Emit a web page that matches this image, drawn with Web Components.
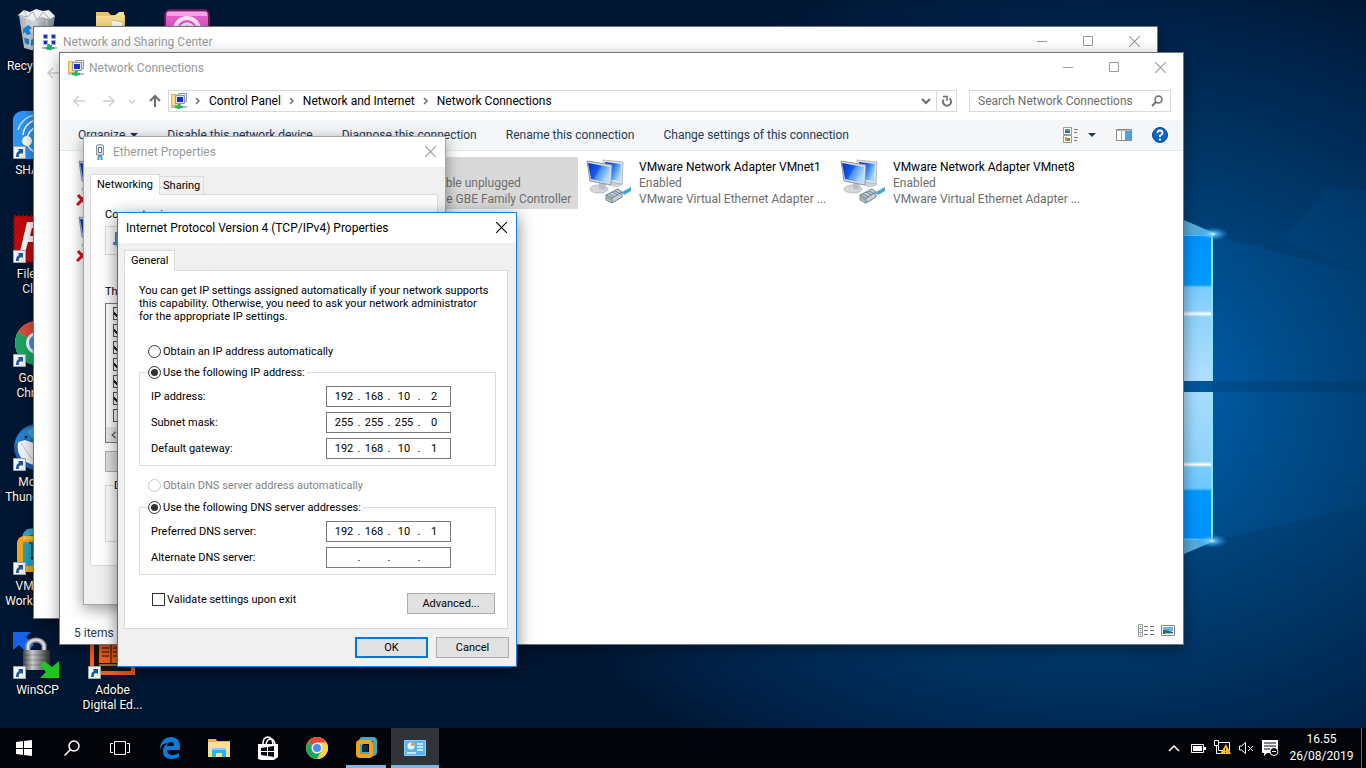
<!DOCTYPE html>
<html lang="en">
<head>
<meta charset="utf-8">
<title>Desktop</title>
<style>
html, body { margin: 0; height: 100%; overflow: hidden; background: #001a38; }
body { font: 12px/16px Roboto, "Open Sans", sans-serif; }
win-desktop { height: 100%; }
#sharing { left: 33px; right: 208px; top: 26px; bottom: 109px; }
#connections { left: 59px; right: 182px; top: 52px; bottom: 83px; }
#ethernet { left: 83px; top: 136px; width: 363px; }
#ipv4 { left: 117px; top: 212px; width: 400px; }
</style>
</head>
<body>
<win-desktop>
  <desk-icon icon="bin">Recycle Bin</desk-icon>
  <desk-icon icon="shareit" shortcut>SHAREit</desk-icon>
  <desk-icon icon="filezilla" shortcut>FileZilla<br>Client</desk-icon>
  <desk-icon icon="chrome" shortcut>Google<br>Chrome</desk-icon>
  <desk-icon icon="thunderbird" shortcut>Mozilla<br>Thunderbird</desk-icon>
  <desk-icon icon="vmware" shortcut>VMware<br>Workstation</desk-icon>
  <desk-icon icon="winscp" shortcut>WinSCP</desk-icon>
  <desk-icon icon="folder" style="grid-area:1/2"></desk-icon>
  <desk-icon icon="adobe" shortcut style="grid-area:7/2">Adobe<br>Digital Ed...</desk-icon>
  <desk-icon icon="pink" style="grid-area:1/3"></desk-icon>

  <win-frame id="sharing" slot="windows" icon="netcenter" heading="Network and Sharing Center" resizable>
    <back-strip></back-strip>
  </win-frame>

  <win-frame id="connections" slot="windows" icon="netfolder" heading="Network Connections" resizable>
    <explorer-nav></explorer-nav>
    <command-bar></command-bar>
    <adapter-list></adapter-list>
    <status-bar>5 items</status-bar>
  </win-frame>

  <win-frame id="ethernet" slot="windows" icon="plug" heading="Ethernet Properties" dialog>
    <ethernet-form></ethernet-form>
  </win-frame>

  <win-frame id="ipv4" slot="windows" heading="Internet Protocol Version 4 (TCP/IPv4) Properties" dialog active>
    <ip-form></ip-form>
  </win-frame>

  <task-bar slot="taskbar"></task-bar>
</win-desktop>

<script>
const ICONS = {
  bin: ['0 0 48 48', `<defs><linearGradient id="g" x2="1"><stop offset="0" stop-color="#b9c0c6"/><stop offset=".4" stop-color="#f0f2f3"/><stop offset="1" stop-color="#8e979e"/></linearGradient></defs>
    <path d="M6 8 42 9 37 42Q25 46 11 41Z" fill="url(#g)" opacity=".9"/><path d="M5 8 11 3 17 5 23 2 30 4 36 3 42 9 37 12 28 10 20 14 12 11Z" fill="#eef0f1"/><path d="m11 3 3 7 6-5 4 8 6-8 6 6M5 8l9 2m16-5 7 7" stroke="#a9b0b5" fill="none"/>
    <path d="M14 12 16 40M24 14v29M34 13 31 42" stroke="#fff" opacity=".5"/>
    <path d="m10 22 5-4 4 3-3 2 2 4-4 1-2-3-2 2zM21 19l5 1 2 7-4 0-3-4zM11 31l5 1 0 6-4-2zM18 33l6-3 1 5-7 4z" fill="#1683d8"/>`],
  shareit: ['0 0 48 48', `<rect width="48" height="48" rx="9" fill="#2d96f5"/><g fill="none" stroke="#fff" stroke-width="1.500"><path d="M10 24A16 16 0 0 1 28 9" /><path d="M5 19A20 20 0 0 1 24 4" opacity=".7"/><path d="M14 30Q14 20 24 15"/><path d="M14 30a12 12 0 0 0 18 10"/></g><circle cx="14" cy="30" r="5" fill="#fff"/><circle cx="25" cy="14" r="4" fill="#fff"/><circle cx="34" cy="34" r="4" fill="#fff"/>`],
  filezilla: ['0 0 48 48', `<rect x="1" y="1" width="46" height="46" fill="#bd0a0a" stroke="#a30000" stroke-width="2" stroke-dasharray="2 2"/><path d="M14 7h18l-2 6H19l-2 8h10l-2 6H15l-4 14H6zM30 22h14l-1 5-12 9h10l-2 6H24l1-5 11-9h-7z" fill="#fff"/>`],
  chrome: ['0 0 48 48', `<circle cx="24" cy="24" r="22" fill="#fcd23f"/><path d="M24 24 5 13A22 22 0 0 1 43 13H24Z" fill="#dd4b3e"/><path d="M5 13A22 22 0 0 0 24 46l10-17-10-5z" fill="#1da462"/><path d="M43 13A22 22 0 0 1 24 46l10-17 0-16z" fill="#fcd23f"/><circle cx="24" cy="24" r="11" fill="#f4f4f4"/><circle cx="24" cy="24" r="8" fill="#4a8af4"/>`],
  thunderbird: ['0 0 48 48', `<circle cx="24" cy="24" r="23" fill="#245fb5"/><path d="M5 19 12 17 21 20 26 12 44 18 41 38Q24 47 10 37 3 30 5 19Z" fill="#f3f6fa"/><path d="m8 20 11 16 20-20" fill="none" stroke="#b7c3d0"/><path d="M2 22C4 4 21 2 29 2 19 6 22 12 17 18 12 14 8 17 2 22Z" fill="#2383d0"/><path d="M14 9Q18 4 28 3 20 7 20 16Z" fill="#3aa5e4"/><circle cx="13" cy="14" r="1.500" fill="#0c2c5c"/>`],
  vmware: ['0 0 48 48', `<rect x="13" y="5" width="31" height="31" rx="5" fill="none" stroke="#43a7c3" stroke-width="7"/><rect x="16" y="10" width="20" height="20" fill="#0e657f"/><path d="M10 17h8v22h-8z" fill="#2aa3bd"/><rect x="7" y="12" width="29" height="30" rx="4" fill="none" stroke="#f4a91c" stroke-width="6"/><path d="M10 11H33" stroke="#ffcb3b" stroke-width="3"/>`],
  vmtask: ['0 0 24 24', `<rect x="7" y="3" width="14" height="15" rx="2" fill="none" stroke="#47a9bf" stroke-width="4"/><rect x="4" y="6" width="13" height="14" rx="2" fill="none" stroke="#f2a21a" stroke-width="4"/><rect x="8" y="9" width="6" height="7" fill="#0b2c3a"/>`],
  winscp: ['0 0 48 48', `<defs><linearGradient id="g" x2="1"><stop offset="0" stop-color="#444"/><stop offset=".35" stop-color="#c9c9c9"/><stop offset="1" stop-color="#292929"/></linearGradient></defs>
    <path d="M0 1h18l-5 5 8 8-8 7-7-7-6 5z" fill="#1462e8"/><path d="M15 20v-6a9 9 0 0 1 16 0v6" fill="none" stroke="#9a9a9a" stroke-width="5"/><path d="M15 20v-6a9 9 0 0 1 16 0v6" fill="none" stroke="#ddd" stroke-width="2"/><rect x="10" y="19" width="27" height="20" rx="2" fill="url(#g)"/><path d="M11 24h25M11 29h25M11 34h25" stroke="#222" opacity=".3"/><path d="m31 30 8 6 7-6v17H27l6-6-6-6z" fill="#1fc522"/>`],
  folder: ['0 0 48 48', `<path d="M8 5h12l3 3h14v34H8z" fill="#e9c65d"/><path d="M8 9h18l5-4h5v38H8z" fill="#f8df92"/><path d="m23 13 12 2v25H21z" fill="#fff" stroke="#d5c079"/><path d="M8 10h16v32H8z" fill="#f6dc88"/>`],
  pink: ['0 0 48 48', `<rect x="2" y="3" width="44" height="43" rx="5" fill="#e45fce" stroke="#5d2158" stroke-width="2"/><path d="M4 7h40" stroke="#f6a3e8" stroke-width="4"/><circle cx="24" cy="23" r="12" fill="none" stroke="#f9e7f6" stroke-width="4"/><path d="M16 22q8-9 14-2" fill="none" stroke="#f9e7f6" stroke-width="3"/>`],
  adobe: ['0 0 48 48', `<rect x="4" y="3" width="41" height="39" fill="#1c1406" stroke="#f7611d" stroke-width="4"/><rect x="11" y="8" width="26" height="24" fill="#f7611d"/><path d="M11 34h26" stroke="#e8c9a0"/><path d="M23 8v24M14 13h7m-7 4h7m-7 4h7m-7 4h7m4-12h7m-7 4h7m-7 4h7m-7 4h7" stroke="#1c1406" fill="none"/>`],
  shortcut: ['0 0 13 13', `<path d="M.5.5h12v12H.5z" fill="#f4f4f4" stroke="#9aa"/><path d="M5 3h5v5L8 7Q5 8 6 11H3Q3 6 6 5Z" fill="#1c57a5"/>`],
  netcenter: ['0 0 16 16', `<g fill="#1730b8" stroke="#a9b1b9"><path d="M1.500.5h4v4h-4zM9.500.5h4v4h-4zM1.500 6.500h4v4h-4zM9.500 6.500h4v4h-4z"/></g><path d="M0 14h15" stroke="#b6bec6" stroke-width="2"/><path d="M7 10v3M3 14h9M6 12h3v4H6z" stroke="#17b968" stroke-width="2" fill="#17b968"/>`],
  netfolder: ['0 0 16 16', `<path d="M.5 1.500h5l1 1h3v10h-9z" fill="#f5dc7c" stroke="#d8b64c"/><path d="M7.500 0.500h8v8h-8z" fill="#dfe5ea" stroke="#8d9aa5"/><path d="M9 2h5v4H9z" fill="#6f86e0"/><path d="M4.500 2.500h9v8h-9z" fill="#dfe5ea" stroke="#8d9aa5"/><path d="M6 4h6v5H6z" fill="#1431c4"/><path d="M0 14h16" stroke="#b6bec6" stroke-width="2"/><path d="M4 14h8M8 11v5" stroke="#17b968" stroke-width="2.500"/>`],
  plug: ['0 0 16 16', `<path d="M4.500 1.500Q8-1 11.500 1.500V11h-7z" fill="#dbe4ec" stroke="#8493a1"/><path d="M6.500 3.500h3v5h-3z" fill="#fff" stroke="#5e6f7f"/><path d="M6 11h4v2H6z" fill="#7c8b99"/><path d="M6.500 13v3M9.500 13v3" stroke="#2da7df" stroke-width="2"/>`],
  nic: ['0 0 16 16', `<path d="M2.500 1.500h12v10h-12z" fill="#6cb5e0" stroke="#3a7ba8"/><path d="M0 11h14v3H0z" fill="#4d94c4"/><path d="M2 15h11" stroke="#b0b7bd"/>`],
  back: ['0 0 16 14', `<path d="M14 7H3M8 2 3 7l5 5" fill="none" stroke="#cfcfcf" stroke-width="1.500"/>`],
  forward: ['0 0 16 14', `<path d="M2 7h11M8 2l5 5-5 5" fill="none" stroke="#cfcfcf" stroke-width="1.500"/>`],
  up: ['0 0 14 14', `<path d="M7 13V3M2 7l5-5 5 5" fill="none" stroke="#6d6d6d" stroke-width="2"/>`],
  down: ['0 0 10 10', `<path d="m1 3 4 4 4-4" fill="none" stroke="#6d6d6d" stroke-width="2"/>`],
  recent: ['0 0 8 8', `<path d="m1 3 3 3 3-3" fill="none" stroke="#cfcfcf" stroke-width="1.500"/>`],
  right: ['0 0 6 8', `<path d="m1 1 3 3-3 3" fill="none" stroke="#6d6d6d" stroke-width="1.500"/>`],
  refresh: ['0 0 12 12', `<path d="M2.700 4.500A4 4 0 1 0 8.500 3.500" fill="none" stroke="#6d6d6d" stroke-width="2"/><path d="M2 1.500h4V6" fill="none" stroke="#6d6d6d" stroke-width="1.500"/>`],
  search: ['0 0 12 12', `<circle cx="7.500" cy="4.500" r="3.500" fill="none" stroke="#6d6d6d" stroke-width="1.500"/><path d="M5 7 1 11" stroke="#6d6d6d" stroke-width="2"/>`],
  caret: ['0 0 8 8', `<path d="M0 2h8L4 6z" fill="#1e395b"/>`],
  view: ['0 0 16 16', `<path d="M.5.5h8v7h-8zM.5 8.500h8v7h-8z" fill="#fff" stroke="#999"/><path d="M2 2h5v2H2z" fill="#4b95e3"/><path d="M2 4h5v2H2z" fill="#2b7355"/><path d="M2 10h2v4H2z" fill="#e59b31"/><path d="M4 11h3v3H4z" fill="#4c9c42"/><path d="M11 2.500h4m-4 3h3m-3 5h4m-4 3h3" stroke="#777"/>`],
  pane: ['0 0 16 12', `<path d="M.5.5h15v11H.5z" fill="#fff" stroke="#888"/><path d="M1 1h14v1H1z" fill="#bbb"/><path d="M5.500 2v9" stroke="#aaa"/><path d="M9 2h6v9H9z" fill="#4aa3e8"/>`],
  help: ['0 0 16 16', `<circle cx="8" cy="8" r="7.500" fill="#0a66c9" stroke="#08488f"/><path d="M5.500 6Q5.500 3.500 8 3.500T10.500 6Q10.500 7.500 8 8.500V10" fill="none" stroke="#fff" stroke-width="1.800"/><path d="M7 11.500h2v2H7z" fill="#fff"/>`],
  details: ['0 0 16 13', `<path d="M.5.5h4v12h-4zM.5 4.500h4M.5 8.500h4" fill="#fff" stroke="#999"/><path d="M2 2h1v1H2z" fill="#3b7"/><path d="M2 6h1v1H2z" fill="#37c"/><path d="M2 10h1v1H2z" fill="#c22"/><path d="M6 2.500h4m2 0h4m-10 4h4m2 0h4m-10 4h4m2 0h4" stroke="#777"/>`],
  large: ['0 0 14 12', `<path d="M.5.5h13v10H.5z" fill="#fff" stroke="#888"/><path d="M2 2h10v4H2z" fill="#6fb0ee"/><path d="M2 5q5 0 10 2v2H2z" fill="#2d6d50"/><path d="M4 8h8v1H4z" fill="#7ec3f3"/>`],
  adapter: ['0 0 46 46', `<defs><linearGradient id="g" x2="1" y2=".5"><stop offset="0" stop-color="#0a2fc0"/><stop offset=".45" stop-color="#1158ea"/><stop offset=".7" stop-color="#4a9af6"/><stop offset="1" stop-color="#a9d6fb"/></linearGradient></defs>
    <ellipse cx="30" cy="25" rx="7" ry="3" fill="#ccd1d6"/><path d="m17 1 20 2-1 22-17-3z" fill="#dfe2e4" stroke="#b3b8bc"/><path d="m19 3 16 2-1 17-14-2z" fill="url(#g)"/>
    <ellipse cx="13" cy="30" rx="9" ry="4" fill="#d4d8dc" stroke="#b9bec3"/><path d="m13 22 7 2-1 7-6-1z" fill="#b9bfc4"/><path d="m1 2 25 4-1 20L4 22z" fill="#dadde0" stroke="#8f969c"/><path d="m2 4 22 4-1 16L5 20z" fill="url(#g)"/><path d="m8 20 8-13 8 1-1 15z" fill="#fff" opacity=".15"/>
    <path d="m20 36 12-6 4 3 0 5-10 6-6-3z" fill="#c3d0dc" stroke="#6c8093"/><path d="m20 36 6 3v5m0-5 10-6M23 35l6 3M26 33l6 3M29 32l6 3" fill="none" stroke="#6c8093"/><path d="m21 37 4 2v3l-4-2z" fill="#a5a988"/><path d="m36 33 9-5v4l-7 4z" fill="#3cabd3"/>`],
  cross: ['0 0 12 12', `<path d="m2 1 9 10M11 1 1 11" stroke="#d2161c" stroke-width="3"/>`],
  start: ['0 0 16 16', `<path d="m0 2 7-1v7H0zM8 1l8-1v8H8zM0 9h7v6l-7-1zM8 9h8v7l-8-1z" fill="#fff"/>`],
  find: ['0 0 16 16', `<circle cx="10" cy="6" r="5" fill="none" stroke="#fff" stroke-width="1.500"/><path d="M6.500 9.500 0.500 15.500" stroke="#fff" stroke-width="1.500"/>`],
  taskview: ['0 0 20 14', `<path d="M4.500.5h11v13h-11zM3 2.500H.5v9H3M17 2.500h2.500v9H17" fill="none" stroke="#fff"/>`],
  edge: ['0 0 20 22', `<path d="M0 10Q2 0 11 0q9 0 9 10v3H7q0 5 6 5 3 0 6-2v4q-3 2-8 2-8 0-8-8 0-5 5-8-6 0-8 6zm7-1h7q0-4-3-4t-4 4z" fill="#0a7ad6"/>`],
  explorer: ['0 0 22 18', `<path d="M0 0h8l1 2h13v16H0z" fill="#e8b63c"/><path d="M0 3h22v15H0z" fill="#fbe18b"/><path d="M4 18V9h14v9h-4v-4H8v4z" fill="#27b4ea"/><path d="M4 9h14v2H4z" fill="#79d3f4"/>`],
  store: ['0 0 22 24', `<path d="M1 8h20v13l-4 3H4l-3-1z" fill="#fff"/><path d="M6 8q0-7 5-7 4 0 5 7M9 8q1-5 5-5 3 0 4 5" fill="none" stroke="#fff" stroke-width="1.500"/><path d="m4 12 6-1v4H4zm7-1 6-1v5h-6zm-7 5h6v4l-6-1zm7 0h6v5l-6-1z" fill="#04070d"/>`],
  control: ['0 0 22 16', `<path d="M.5.5h21v15H.5z" fill="#5cb5ee" stroke="#86d0fa"/><circle cx="7" cy="6" r="3.500" fill="#f0f8ff"/><path d="M7 6V2.500A3.500 3.500 0 0 1 10.500 6z" fill="#f2a22a"/><path d="M13 4h6m-6 3h6m-6 3h6M3 13h9" stroke="#eaf6ff" stroke-width="1.500"/>`],
  chevup: ['0 0 12 8', `<path d="m1 7 5-5 5 5" fill="none" stroke="#fff" stroke-width="1.500"/>`],
  battery: ['0 0 15 9', `<path d="M.5.5h12v8H.5z" fill="none" stroke="#fff"/><path d="M2 2h9v5H2zM13 3h2v3h-2z" fill="#fff"/>`],
  net: ['0 0 17 16', `<path d="M5 2.500h10.500v8H4.500V6M.5.5h4v5h-4zM2.500 6v7.500H7" fill="none" stroke="#fff"/><path d="m12 4 5 10H6z" fill="#fbbf24"/><path d="M11 8h1v3h-1zM11 12h1v1h-1z" fill="#222"/>`],
  volume: ['0 0 15 12', `<path d="M.5 4h2l4-3.500v11l-4-3.500h-2zM9 4l5 5M14 4 9 9" fill="none" stroke="#fff"/>`],
  action: ['0 0 17 17', `<path d="M0 0h16v9H8v4H5l-3 3v-3H0z" fill="#fff"/><path d="M2 3h12M2 6h12M2 9h6" stroke="#04070d"/><circle cx="12" cy="11.500" r="4" fill="#04070d" stroke="#fff"/><path d="M10 11.500h4" stroke="#fff"/>`],
  min: ['0 0 11 11', `<path d="M0 5.500h10" stroke="currentColor"/>`],
  max: ['0 0 11 11', `<path d="M.5.5h9v9h-9z" fill="none" stroke="currentColor"/>`],
  close: ['0 0 11 11', `<path d="m0 0 11 11M11 0 0 11" stroke="currentColor" stroke-width="1.100"/>`]
};

/* Registers an element whose shadow root holds the given style and markup. */
function element(name, css, html, setup) {
  customElements.define(name, class extends HTMLElement {
    constructor() {
      super();
      const root = this.attachShadow({ mode: 'open' });
      root.innerHTML = '<style>*{box-sizing:border-box}button{font:inherit;color:inherit;background:none;border:0;padding:0;margin:0}' + css + '</style>' +
        (typeof html === 'function' ? html(this) : html);
      if (setup) setup(this, root);
    }
  });
}

element('win-icon', ':host{display:inline-flex;flex:none}svg{display:block}', host => {
  const [box, shapes] = ICONS[host.getAttribute('name')];
  const [, , w, h] = box.split(' ');
  const size = (host.getAttribute('size') || w + ' ' + h).split(' ');
  return `<svg viewBox="${box}" width="${size[0]}" height="${size[1] || size[0]}" fill="none" aria-hidden="true">${shapes}</svg>`;
});

element('wall-paper', ':host{display:block}svg{display:block;width:100%;height:100%}', `
<svg viewBox="0 0 1366 768" preserveAspectRatio="xMidYMid slice" aria-hidden="true">
  <defs>
    <radialGradient id="sky" gradientUnits="userSpaceOnUse" cx="1090" cy="400" r="620" gradientTransform="translate(0 110) scale(1 .72)">
      <stop offset="0" stop-color="#0068b8"/><stop offset=".35" stop-color="#00467f"/><stop offset=".6" stop-color="#003463"/><stop offset=".85" stop-color="#002148"/><stop offset="1" stop-color="#001733"/>
    </radialGradient>
    <radialGradient id="flare"><stop offset="0" stop-color="#fff"/><stop offset=".2" stop-color="#7ed4ff" stop-opacity=".8"/><stop offset="1" stop-color="#0090ff" stop-opacity="0"/></radialGradient>
    <linearGradient id="beam" x2="1"><stop offset="0" stop-color="#0060b0" stop-opacity=".3"/><stop offset="1" stop-color="#005499" stop-opacity=".15"/></linearGradient>
    <linearGradient id="top" x2="0" y2="1"><stop offset="0" stop-color="#0092ff"/><stop offset=".34" stop-color="#009cff"/><stop offset=".36" stop-color="#7accff"/><stop offset=".52" stop-color="#8dd4ff"/><stop offset=".54" stop-color="#fff"/><stop offset=".56" stop-color="#8fd3fc"/><stop offset="1" stop-color="#aee0ff"/></linearGradient>
    <linearGradient id="low" x2="0" y2="1"><stop offset="0" stop-color="#a6dcff"/><stop offset=".47" stop-color="#8fd3fc"/><stop offset=".49" stop-color="#fff"/><stop offset=".51" stop-color="#7accff"/><stop offset=".65" stop-color="#6cc8ff"/><stop offset=".67" stop-color="#0098ff"/><stop offset="1" stop-color="#0092ff"/></linearGradient>
  </defs>
  <path d="M0 0h1366v768H0z" fill="#001733"/>
  <path d="M0 0h1366v768H0z" fill="url(#sky)"/>
  <path d="M1212 235 1366 275V505L1212 541Z" fill="url(#beam)"/>
  <path d="M1284 240 1325 188 1366 190V275Z" fill="#0060b0" opacity=".12"/>
  <path d="M1212 381H1366V392H1212Z" fill="#002a58" opacity=".25"/>
  <path d="M1040 235h173l-1 146h-172z" fill="url(#top)"/>
  <path d="M1040 392h172l-1 148h-171z" fill="url(#low)"/>
  <path d="M1212 235v146M1212 392v148" stroke="#8fe4ff" stroke-width="2"/>
  <path d="M1170 214 1214 233V236L1170 236ZM1170 560 1212 542V539L1170 538Z" fill="#73d2ff" opacity=".75"/>
  <ellipse cx="1213" cy="234" rx="16" ry="7" fill="url(#flare)"/><ellipse cx="1212" cy="541" rx="16" ry="7" fill="url(#flare)"/>
</svg>`);

element('win-desktop', `
:host{display:flex;flex-direction:column;position:relative;overflow:hidden;color:#000}
wall-paper{position:absolute;inset:0}
main{position:relative;flex:1;min-height:0}
.icons{display:grid;grid-auto-flow:column;grid-template-columns:75px 75px 75px;grid-template-rows:repeat(7,104px);color:#fff}
`, `<wall-paper></wall-paper><main><div class="icons"><slot></slot></div><slot name="windows"></slot></main><slot name="taskbar"></slot>`);

element('desk-icon', `
:host{display:block;text-align:center}
button{width:100%;padding-top:7px;line-height:15px;text-shadow:0 1px 2px #000,0 0 3px #000}
.art{position:relative;display:block;width:48px;margin:0 13px 4px}
.art win-icon{display:flex}
.art .arrow{position:absolute;left:0;bottom:0}
`, host => `<button><span class="art"><win-icon name="${host.getAttribute('icon')}"></win-icon>${host.hasAttribute('shortcut') ? '<win-icon class="arrow" name="shortcut"></win-icon>' : ''}</span><slot></slot></button>`);

element('win-frame', `
:host{position:absolute;display:flex;flex-direction:column;box-sizing:border-box;background:#fff;border:1px solid #6f7680;box-shadow:0 4px 14px rgba(0,0,0,.4)}
:host([dialog]){background:#f0f0f0;border-color:#a5a5a5}
:host([active]){border-color:#1883d7;box-shadow:0 4px 16px rgba(0,0,0,.5)}
header{display:flex;align-items:center;height:29px;padding-left:8px;background:#fff;color:#999;flex:none}
:host([dialog]) header{height:30px}
:host([active]) header{color:#000}
h1{flex:1;margin:0 0 0 5px;font:inherit;white-space:nowrap}
:host([active]) h1{margin-left:0}
button{display:grid;place-items:center;width:46px;height:28px;align-self:flex-start}
:host([dialog]) button{width:30px}
`, host => {
  const icon = host.getAttribute('icon');
  const wide = host.hasAttribute('resizable');
  return `<header>${icon ? `<win-icon name="${icon}"></win-icon>` : ''}<h1>${host.getAttribute('heading')}</h1>
  ${wide ? '<button aria-label="Minimize"><win-icon name="min"></win-icon></button><button aria-label="Maximize"><win-icon name="max"></win-icon></button>' : ''}
  <button aria-label="Close"><win-icon name="close"></win-icon></button></header><slot></slot>`;
});

element('back-strip', ':host{display:block;padding:10px 11px}', '<button aria-label="Back"><win-icon name="back"></win-icon></button>');

element('explorer-nav', `
:host{display:flex;align-items:center;height:38px;padding:0 12px 0 6px}
button{display:grid;place-items:center;width:26px;height:22px}
.back{margin-right:4px}.recent{width:20px}
.address{flex:1;display:flex;align-items:center;gap:8px;height:22px;border:1px solid #d9d9d9;padding-left:2px;min-width:0}
.address a{color:#000;text-decoration:none;white-space:nowrap}
.grow{flex:1}
.address button{width:20px}
.address .refresh{border-left:1px solid #d9d9d9;margin-left:-8px}
form{display:flex;align-items:center;width:202px;height:22px;border:1px solid #d9d9d9;margin-left:12px}
input{flex:1;min-width:0;border:0;padding:0 0 0 8px;font:inherit;background:none;outline:0}
input::placeholder{color:#6d6d6d;opacity:1}
`, `<button class="back" aria-label="Back"><win-icon name="back"></win-icon></button><button aria-label="Forward"><win-icon name="forward"></win-icon></button><button class="recent" aria-label="Recent locations"><win-icon name="recent"></win-icon></button><button aria-label="Up"><win-icon name="up"></win-icon></button>
<nav class="address"><win-icon name="netfolder"></win-icon><win-icon name="right"></win-icon><a href="#">Control Panel</a><win-icon name="right"></win-icon><a href="#">Network and Internet</a><win-icon name="right"></win-icon><a href="#">Network Connections</a><span class="grow"></span><button aria-label="Previous locations"><win-icon name="down"></win-icon></button><button class="refresh" aria-label="Refresh"><win-icon name="refresh"></win-icon></button></nav>
<form><input type="search" placeholder="Search Network Connections" aria-label="Search Network Connections"><button type="button" aria-label="Search"><win-icon name="search"></win-icon></button></form>`);

element('command-bar', `
:host{display:flex;align-items:center;gap:29px;height:31px;padding:0 15px 0 18px;background:#f4f6f8;border-bottom:1px solid #e5e8ea;color:#1e395b;box-sizing:border-box}
button{display:flex;align-items:center;gap:5px;white-space:nowrap}
.tools{display:flex;align-items:center;gap:20px;margin-left:auto}
.views{gap:9px}
`, `<button>Organize <win-icon name="caret"></win-icon></button><button>Disable this network device</button><button>Diagnose this connection</button><button>Rename this connection</button><button>Change settings of this connection</button>
<div class="tools"><button class="views" aria-label="Change your view"><win-icon name="view"></win-icon><win-icon name="caret"></win-icon></button><button aria-label="Preview pane"><win-icon name="pane"></win-icon></button><button aria-label="Help"><win-icon name="help"></win-icon></button></div>`);

element('adapter-list', `
:host{flex:1;display:grid;grid-template-columns:repeat(auto-fill,252px);grid-auto-rows:52px;gap:4px 2px;padding:6px 12px;align-content:start}
`, `<net-adapter off></net-adapter>
<net-adapter selected><span slot="state">Network cable unplugged</span><span slot="device">Realtek PCIe GBE Family Controller</span></net-adapter>
<net-adapter>VMware Network Adapter VMnet1<span slot="state">Enabled</span><span slot="device">VMware Virtual Ethernet Adapter ...</span></net-adapter>
<net-adapter>VMware Network Adapter VMnet8<span slot="state">Enabled</span><span slot="device">VMware Virtual Ethernet Adapter ...</span></net-adapter>
<net-adapter off></net-adapter>`);

element('net-adapter', `
:host{display:flex;gap:7px;padding:2px 0 2px 6px;position:relative;box-sizing:border-box;white-space:nowrap}
:host([selected]){background:#d9d9d9}
.mark{position:absolute;left:4px;bottom:3px}
div div{height:16px}
.grey{color:#6d6d6d}
`, host => `<win-icon name="adapter"></win-icon>${host.hasAttribute('off') ? '<win-icon class="mark" name="cross"></win-icon>' : ''}<div><div><slot></slot></div><div class="grey"><slot name="state"></slot></div><div class="grey"><slot name="device"></slot></div></div>`);

element('status-bar', ':host{display:flex;align-items:center;gap:7px;height:23px;padding:0 8px 0 14px;color:#1e395b;flex:none;box-sizing:border-box}span{flex:1}',
`<span><slot></slot></span><button aria-label="Details"><win-icon name="details"></win-icon></button><button aria-label="Large icons"><win-icon name="large"></win-icon></button>`);

element('tab-sheet', `
:host{display:block}
.tabs{display:flex;align-items:flex-end;margin-bottom:-1px;position:relative}
button{height:19px;padding:0 3px;background:#f0f0f0;border:1px solid #dcdcdc;border-left:0}
button:first-child{height:21px;padding:0 6px;background:#fff;border-left:1px solid #dcdcdc;border-bottom-color:#fff}
section{background:#fff;border:1px solid #dcdcdc;padding:13px 11px 14px 14px}
`, host => `<div class="tabs" role="tablist">${host.getAttribute('tabs').split(',').map((t, i) => `<button role="tab" aria-selected="${!i}">${t}</button>`).join('')}</div><section role="tabpanel"><slot></slot></section>`);

element('group-box', `
:host{display:block}
fieldset{margin:0;border:1px solid #dcdcdc;padding:5px 11px 6px 8px;min-width:0}
legend{padding:0 2px 0 0}
.body{display:flex;flex-direction:column;gap:5px;padding-left:3px}
`, `<fieldset><legend><slot name="legend"></slot></legend><div class="body"><slot></slot></div></fieldset>`);

element('choice-input', `
:host{display:block;line-height:17px}
label{display:flex;align-items:center;gap:2px;height:17px;white-space:nowrap}
input{appearance:none;flex:none;width:13px;height:13px;margin:0;border:1px solid #333;background:#fff;display:grid;place-items:center}
input[type=radio]{border-radius:50%}
input[type=radio]:checked::before{content:"";width:7px;height:7px;border-radius:50%;background:#333}
input:disabled{border-color:#ccc}
:host([disabled]){color:#838383}
`, host => `<label><input type="${host.getAttribute('type')}" ${host.hasAttribute('checked') ? 'checked' : ''} ${host.hasAttribute('disabled') ? 'disabled' : ''}><span><slot></slot></span></label>`,
(host, root) => {
  root.querySelector('input').addEventListener('change', () => {
    const group = host.getAttribute('group');
    if (!group) return;
    host.getRootNode().querySelectorAll(`choice-input[group="${group}"]`).forEach(other => {
      if (other !== host) other.shadowRoot.querySelector('input').checked = false;
    });
  });
});

element('ip-field', `
:host{display:grid;grid-template-columns:175px 125px;align-items:center}
.box{display:flex;align-items:center;height:21px;border:1px solid #7a7a7a;background:#fff;padding-left:4px}
input{width:26px;height:17px;border:0;padding:0;margin:0;font:inherit;text-align:center;background:none;outline:0}
i{width:4px;text-align:center;font-style:normal}
`, host => {
  const label = host.getAttribute('label');
  const parts = host.getAttribute('value').split('.');
  return `<label for="o0">${label}</label><div class="box">${parts.map((p, i) => `<input id="o${i}" maxlength="3" value="${p}" aria-label="${label} part ${i + 1}">`).join('<i>.</i>')}</div>`;
});

element('push-button', `
:host{display:inline-block}
button{display:block;width:100%;height:21px;background:#e1e1e1;border:1px solid #adadad}
:host([default]) button{border:2px solid #0078d7}
`, '<button><slot></slot></button>');

element('ip-form', `
:host{display:block;padding:7px 7px 8px 6px;font-size:11px;line-height:13px}
tab-sheet{margin-right:1px}
p{margin:0}
.auto{margin:20px 0 4px 9px}
.auto.dns{margin:11px 0 5px 9px}
.last{display:flex;align-items:flex-start;justify-content:space-between;margin-top:16px;height:23px;padding:0 1px 0 13px}
.last push-button{width:88px;margin-top:2px}
footer{display:flex;justify-content:flex-end;gap:8px;margin-top:8px}
footer push-button{width:73px}
`, `<tab-sheet tabs="General">
<p>You can get IP settings assigned automatically if your network supports<br>this capability. Otherwise, you need to ask your network administrator<br>for the appropriate IP settings.</p>
<choice-input class="auto" type="radio" group="ip">Obtain an IP address automatically</choice-input>
<group-box><choice-input slot="legend" type="radio" group="ip" checked>Use the following IP address:</choice-input>
<ip-field label="IP address:" value="192.168.10.2"></ip-field><ip-field label="Subnet mask:" value="255.255.255.0"></ip-field><ip-field label="Default gateway:" value="192.168.10.1"></ip-field></group-box>
<choice-input class="auto dns" type="radio" group="dns" disabled>Obtain DNS server address automatically</choice-input>
<group-box><choice-input slot="legend" type="radio" group="dns" checked>Use the following DNS server addresses:</choice-input>
<ip-field label="Preferred DNS server:" value="192.168.10.1"></ip-field><ip-field label="Alternate DNS server:" value="..."></ip-field></group-box>
<div class="last"><choice-input type="checkbox">Validate settings upon exit</choice-input><push-button>Advanced...</push-button></div>
</tab-sheet>
<footer><push-button default>OK</push-button><push-button>Cancel</push-button></footer>`);

element('ethernet-form', `
:host{display:block;padding:7px 7px 38px 6px;font-size:11px;line-height:13px}
.device{height:29px;border:1px solid #dcdcdc;margin:5px 0 30px;padding:4px 7px}
.list{height:140px;margin-top:5px;border:1px solid #7a7a7a;display:flex;flex-direction:column}
.rows{flex:1;padding:1px 7px;display:grid;grid-auto-rows:17px;align-items:center;overflow:hidden}
input{appearance:none;width:13px;height:13px;margin:0;border:1px solid #555;background:#fff}
input:checked{background:linear-gradient(45deg,transparent 3px,#222 3px,#222 5px,transparent 5px) #fff}
.bar{height:15px;background:#e9e9e9;display:flex;align-items:center;padding-left:4px}
.bar win-icon{transform:rotate(90deg)}
push-button{width:100px;margin:8px 0 4px}
.space{height:38px}
group-box{margin-bottom:9px}
`, `<tab-sheet tabs="Networking,Sharing">Connect using:
<div class="device"><win-icon name="nic"></win-icon></div>
This connection uses the following items:
<div class="list"><div class="rows">${'<input type="checkbox" checked aria-label="Network component">'.repeat(6)}<input type="checkbox" aria-label="Network component"></div><div class="bar"><win-icon name="down" size="8"></win-icon></div></div>
<push-button></push-button>
<group-box><span slot="legend">Description</span><div class="space"></div></group-box>
</tab-sheet>`);

element('task-bar', `
:host{position:relative;display:flex;align-items:stretch;height:40px;background:#020409;color:#fff;flex:none}
button{display:grid;place-items:center;width:48px}
.apps{display:flex;gap:1px;margin-left:2px}
.open{background:linear-gradient(#76b9ed,#76b9ed) 4px 100%/40px 3px no-repeat}
.current{background:linear-gradient(#76b9ed,#76b9ed) 0 100%/100% 3px no-repeat #303337}
.tray{display:flex;align-items:center;margin-left:auto}
.tray button{width:24px;height:40px}
.tray .clock{display:block;width:79px;line-height:17px;text-align:center}
.show{width:5px;border-left:1px solid #666b72}
`, `<button aria-label="Start"><win-icon name="start"></win-icon></button><button aria-label="Search"><win-icon name="find"></win-icon></button><button aria-label="Task view"><win-icon name="taskview"></win-icon></button>
<div class="apps"><button aria-label="Edge"><win-icon name="edge"></win-icon></button><button aria-label="File Explorer"><win-icon name="explorer"></win-icon></button><button aria-label="Store"><win-icon name="store"></win-icon></button><button aria-label="Chrome"><win-icon name="chrome" size="24"></win-icon></button><button class="open" aria-label="VMware"><win-icon name="vmtask"></win-icon></button><button class="current" aria-label="Control Panel"><win-icon name="control"></win-icon></button></div>
<div class="tray"><button aria-label="Hidden icons"><win-icon name="chevup"></win-icon></button><button aria-label="Battery"><win-icon name="battery"></win-icon></button><button aria-label="Network"><win-icon name="net"></win-icon></button><button aria-label="Volume"><win-icon name="volume"></win-icon></button><button aria-label="Notifications"><win-icon name="action"></win-icon></button><button class="clock">16.55<br>26/08/2019</button></div><button class="show" aria-label="Show desktop"></button>`);
</script>
</body>
</html>
